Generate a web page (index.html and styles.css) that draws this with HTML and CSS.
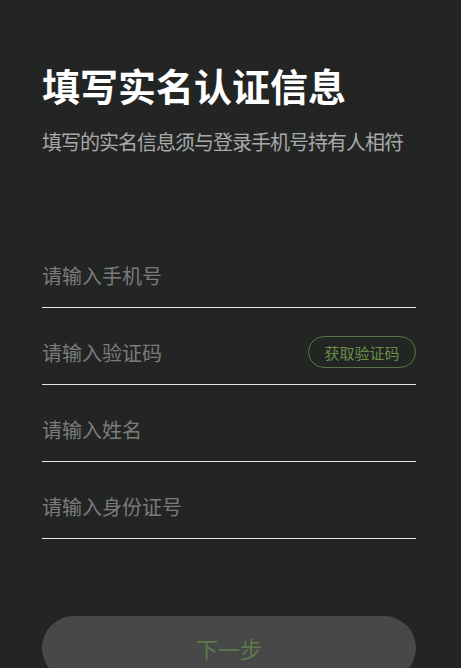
FILE: index.html
```html
<!DOCTYPE html>
<html lang="zh-CN">
<head>
    <meta charset="UTF-8">
    <meta name="viewport" content="width=device-width, initial-scale=1.0">
    <title>填写实名认证信息</title>
    <link rel="stylesheet" href="styles.css">
</head>
<body>

    <div class="page">
        <h1 class="title">填写实名认证信息</h1>
        <p class="subtitle">填写的实名信息须与登录手机号持有人相符</p>

        <div class="form">
            <div class="row">
                <input class="field" type="tel" placeholder="请输入手机号">
            </div>
            <div class="row">
                <input class="field" type="text" placeholder="请输入验证码">
                <button class="code-btn">获取验证码</button>
            </div>
            <div class="row">
                <input class="field" type="text" placeholder="请输入姓名">
            </div>
            <div class="row">
                <input class="field" type="text" placeholder="请输入身份证号">
            </div>
        </div>

        <button class="next-btn">下一步</button>
    </div>

</body>
</html>
```

FILE: styles.css
```css
* { box-sizing: border-box; margin: 0; padding: 0; font-family: "Noto Sans CJK SC", "Noto Sans", sans-serif; }
body { background-color: #232524; color: white; overflow: hidden; }
.page { padding: 62px 45px 0 42px; }
.title { font-size: 38px; line-height: 46px; font-weight: bold; color: #fff; }
.subtitle { margin-top: 20px; font-size: 20px; line-height: 28px; letter-spacing: -1px; color: #a9a9a9; white-space: nowrap; }
.form { margin-top: 75px; }
.row { display: flex; align-items: center; height: 77px; padding: 28px 0 16px; border-bottom: 1px solid #e6e6e6; }
.field { flex: 1; min-width: 0; height: 32px; background: transparent; border: none; outline: none; font-size: 20px; color: #ddd; }
.field::placeholder { color: #7b7b7b; }
.code-btn { width: 108px; height: 32px; border: 1px solid #56763d; border-radius: 16px; background: transparent; color: #6a8e48; font-size: 15px; cursor: pointer; }
.next-btn { display: block; width: 100%; height: 64px; margin-top: 77px; border: none; border-radius: 32px; background: #484848; color: #5c7a4a; font-size: 22px; cursor: pointer; }
```
